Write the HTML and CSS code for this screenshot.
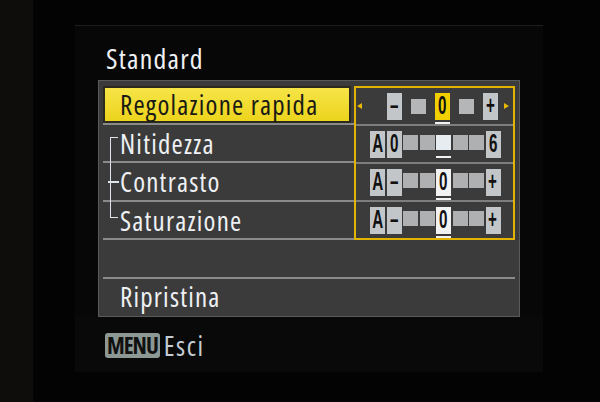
FILE: index.html
```html
<!DOCTYPE html>
<html lang="it">
<head>
    <meta charset="UTF-8">
    <meta name="viewport" content="width=device-width, initial-scale=1.0">
    <title>Standard</title>
    <link rel="stylesheet" href="styles.css">
</head>
<body>
    <div class="bezel"></div>
    <div class="screen">
        <div class="title">Standard</div>
        <div class="panel">
            <div class="grid">
                <div class="labels">
                    <div class="label active"><span class="text">Regolazione rapida</span></div>
                    <div class="label"><span class="text">Nitidezza</span></div>
                    <div class="label"><span class="text">Contrasto</span></div>
                    <div class="label"><span class="text">Saturazione</span></div>
                    <div class="tree"></div>
                </div>
                <div class="values">
                    <div class="vrow quick">
                        <span class="arrow left"></span>
                        <span class="key"><span class="g">–</span></span>
                        <span class="dot"></span>
                        <span class="key sel mark"><span class="g">0</span></span>
                        <span class="dot"></span>
                        <span class="key"><span class="g">+</span></span>
                        <span class="arrow right"></span>
                    </div>
                    <div class="vrow scale">
                        <span class="key"><span class="g">A</span></span>
                        <span class="key"><span class="g">0</span></span>
                        <span class="seg"></span>
                        <span class="seg"></span>
                        <span class="seg cur"></span>
                        <span class="seg"></span>
                        <span class="seg"></span>
                        <span class="key"><span class="g">6</span></span>
                    </div>
                    <div class="vrow scale">
                        <span class="key"><span class="g">A</span></span>
                        <span class="key"><span class="g">–</span></span>
                        <span class="seg"></span>
                        <span class="seg"></span>
                        <span class="key on mark"><span class="g">0</span></span>
                        <span class="seg"></span>
                        <span class="seg"></span>
                        <span class="key"><span class="g">+</span></span>
                    </div>
                    <div class="vrow scale">
                        <span class="key"><span class="g">A</span></span>
                        <span class="key"><span class="g">–</span></span>
                        <span class="seg"></span>
                        <span class="seg"></span>
                        <span class="key on mark"><span class="g">0</span></span>
                        <span class="seg"></span>
                        <span class="seg"></span>
                        <span class="key"><span class="g">+</span></span>
                    </div>
                </div>
            </div>
            <div class="reset">Ripristina</div>
        </div>
        <div class="footer">
            <span class="menu">MENU</span>
            <span class="esci">Esci</span>
        </div>
    </div>
</body>
</html>
```

FILE: styles.css
```css
body {
    margin: 0;
    height: 402px;
    overflow: hidden;
    display: flex;
    background-color: #030303;
    font-family: "Open Sans", sans-serif;
    font-stretch: 75%;
    color: #eef0f3;
}

.bezel {
    width: 33px;
    background-color: #0f0c0c;
}

.screen {
    width: 468px;
    height: 346px;
    margin: 25px 0 0 42px;
    display: flex;
    flex-direction: column;
    background-color: #070707;
    border-top: 1px solid #1e1e1e;
}

.title {
    height: 54px;
    box-sizing: border-box;
    padding: 16px 0 0 31px;
    font-size: 28px;
    line-height: 32px;
    letter-spacing: 1.2px;
}

.panel {
    width: 422px;
    height: 237px;
    margin-left: 23px;
    box-sizing: border-box;
    padding: 5px 4px 0 4px;
    background-color: #3b3b3b;
    border: 1px solid #5a5a5a;
}

.grid {
    display: flex;
}

.labels {
    width: 251px;
    position: relative;
}

.label {
    height: 38.5px;
    box-sizing: border-box;
    border-bottom: 2px solid #8a8a8a;
}

.text {
    display: block;
    height: 36.5px;
    box-sizing: border-box;
    padding: 2px 0 0 17px;
    font-size: 27px;
    line-height: 34px;
    letter-spacing: 1.2px;
}

.label.active .text {
    margin-right: 3px;
    color: #1a1a14;
    background: linear-gradient(#f7e64a, #ecd21a);
    box-shadow: inset 0 0 0 2px #2b2a1c;
}

.tree {
    position: absolute;
    left: 7px;
    top: 51px;
    width: 7px;
    height: 79px;
    border: 1.5px solid #dfe4ea;
    border-right: none;
}

.tree::after {
    content: "";
    position: absolute;
    left: -3px;
    top: 43px;
    width: 11px;
    height: 1.5px;
    background-color: #dfe4ea;
}

.values {
    width: 161px;
    height: 154px;
    box-sizing: border-box;
    display: flex;
    flex-direction: column;
    border: 2px solid #e2b300;
}

.vrow {
    flex: 1;
    display: flex;
    align-items: center;
    border-bottom: 2px solid #7e7e7e;
}

.vrow:last-child {
    border-bottom: none;
}

.quick {
    padding-left: 1px;
    gap: 9px;
}

.quick .arrow.left {
    margin-right: 16px;
}

.quick .arrow.right {
    margin-left: -3px;
}

.scale {
    padding-left: 14px;
    gap: 1.5px;
}

.arrow {
    width: 0;
    height: 0;
    border-top: 3.5px solid transparent;
    border-bottom: 3.5px solid transparent;
}

.arrow.left {
    border-right: 5px solid #e8b800;
}

.arrow.right {
    border-left: 5px solid #e8b800;
}

.key {
    position: relative;
    width: 15px;
    height: 27px;
    display: flex;
    align-items: center;
    justify-content: center;
    background-color: #c3c6c9;
    color: #111;
    font-family: "Liberation Sans", sans-serif;
    font-weight: bold;
    font-size: 19px;
}

.g {
    display: block;
    line-height: 20px;
    transform: scale(0.8, 1.4);
}

.key.sel {
    background-color: #f2d000;
}

.key.on {
    background-color: #f2f2f2;
}

.dot {
    width: 15px;
    height: 15px;
    background-color: #b4b6b8;
}

.seg {
    position: relative;
    width: 15px;
    height: 15px;
    margin-top: -3px;
    background-color: #aeb0b2;
}

.seg.cur {
    background-color: #e6ecef;
}

.mark::after,
.seg.cur::after {
    content: "";
    position: absolute;
    left: 0;
    right: 0;
    bottom: -4px;
    height: 2px;
    background-color: #f2f2f2;
}

.seg.cur::after {
    bottom: -8px;
}

.reset {
    height: 38px;
    box-sizing: border-box;
    margin-top: 37px;
    padding: 1px 0 0 17px;
    border-top: 2px solid #8a8a8a;
    font-size: 27px;
    line-height: 34px;
    letter-spacing: 1.2px;
}

.footer {
    flex: 1;
    display: flex;
    align-items: center;
    gap: 4px;
    padding: 2px 0 0 30px;
    background-color: #090909;
}

.menu {
    height: 25px;
    padding: 0 2px;
    border-radius: 3px;
    background-color: #8d9895;
    color: #111;
    font-weight: bold;
    font-size: 23px;
    line-height: 25px;
    letter-spacing: -1px;
}

.esci {
    color: #c4ccd4;
    font-size: 27px;
    line-height: 30px;
    letter-spacing: 1.5px;
}
```
